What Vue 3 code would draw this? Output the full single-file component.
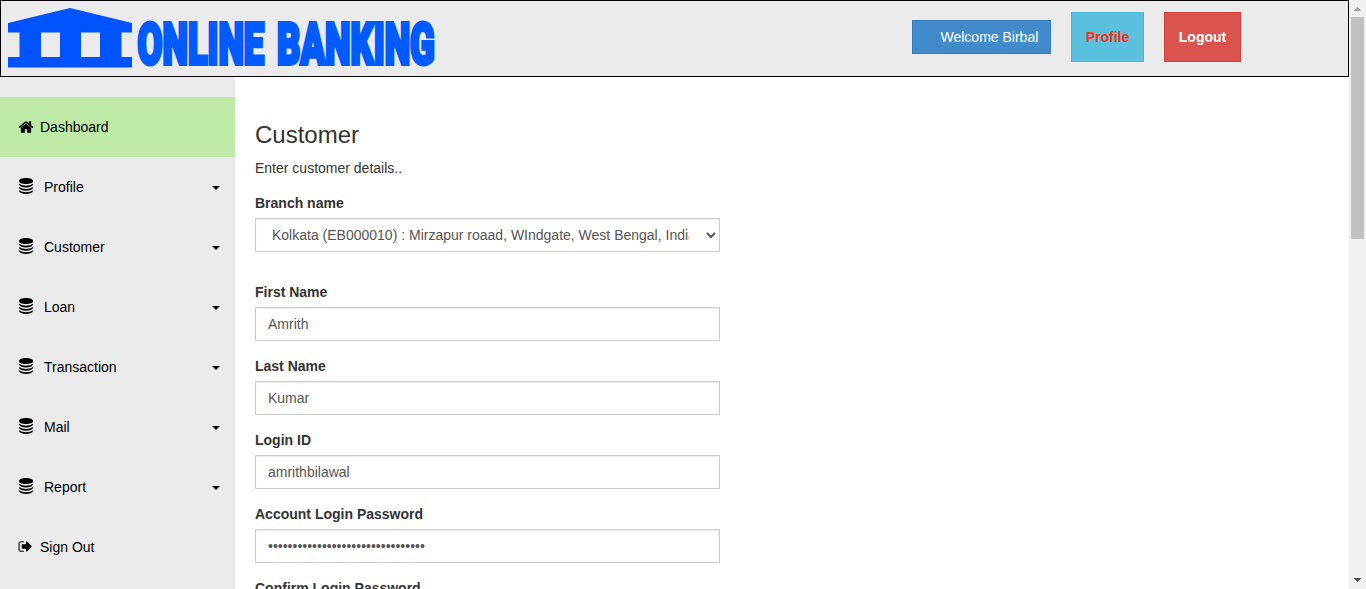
<script setup>
import { ref } from 'vue'

const icons = {
  home: { box: '0 0 1792 1792', d: 'M1472 992v480q0 26-19 45t-45 19h-384v-384h-256v384h-384q-26 0-45-19t-19-45v-480q0-1 .5-3t.5-3l575-474 575 474q1 2 1 6zm223-69l-62 74q-8 9-21 11h-3q-13 0-21-7l-692-577-692 577q-12 8-24 7-13-2-21-11l-62-74q-8-10-7-23.5t11-21.5l719-599q32-26 76-26t76 26l244 204v-195q0-14 9-23t23-9h192q14 0 23 9t9 23v408l219 182q10 8 11 21.5t-7 23.5z' },
  database: { box: '0 0 16 16', d: 'M1 2.900C1 1.100 4 0 8 0S15 1.100 15 2.900V3.300C15 5 12 6.100 8 6.100S1 5 1 3.300ZM1 5.800C4.500 8.300 11.500 8.300 15 5.800V6.800C14 8.800 11 9.500 8 9.500S2 8.800 1 6.800ZM1 9C4.500 11.500 11.500 11.500 15 9V10C14 12 11 12.700 8 12.700S2 12 1 10ZM1 12.300C4.500 14.800 11.500 14.800 15 12.300V13.300C14 15.300 11 16 8 16S2 15.300 1 13.300Z' },
  signout: { box: '0 0 1792 1792', d: 'M704 1440q0 4 1 20t.5 26.5-3 23.5-10 19.5-20.5 6.5h-320q-119 0-203.5-84.5t-84.5-203.5v-704q0-119 84.5-203.5t203.5-84.5h320q13 0 22.5 9.5t9.5 22.5q0 4 1 20t.5 26.5-3 23.5-10 19.5-20.5 6.5h-320q-66 0-113 47t-47 113v704q0 66 47 113t113 47h312l11.5 1 11.5 3 8 5.5 7 9 2 13.5zm928-544q0 26-19 45l-544 544q-19 19-45 19t-45-19-19-45v-288h-448q-26 0-45-19t-19-45v-384q0-26 19-45t45-19h448v-288q0-26 19-45t45-19 45 19l544 544q19 19 19 45z' },
}

const menu = [
  { label: 'Dashboard', icon: 'home', active: true },
  { label: 'Profile', icon: 'database' },
  { label: 'Customer', icon: 'database' },
  { label: 'Loan', icon: 'database' },
  { label: 'Transaction', icon: 'database' },
  { label: 'Mail', icon: 'database' },
  { label: 'Report', icon: 'database' },
  { label: 'Sign Out', icon: 'signout' },
]

const branch = 'Kolkata (EB000010) : Mirzapur roaad, WIndgate, West Bengal, India'
const fields = ref([
  { label: 'First Name', type: 'text', value: 'Amrith' },
  { label: 'Last Name', type: 'text', value: 'Kumar' },
  { label: 'Login ID', type: 'text', value: 'amrithbilawal' },
  { label: 'Account Login Password', type: 'password', value: 'x'.repeat(32) },
  { label: 'Confirm Login Password', type: 'password', value: 'x'.repeat(32) },
])
</script>

<template>
  <div class="window">
    <div class="page">
      <header class="topbar">
        <svg class="logo" width="440" height="75" viewBox="1 1 440 75">
          <path fill="#0053ff" fill-rule="evenodd" d="M8 23L70 8L132 23V32.500H121.500V57H132V67.500H8V57H19.500V32.500H8ZM41 32.500V57H60V32.500ZM81 32.500V57H100V32.500Z" />
          <g class="logo-text">
            <text transform="translate(137.500 63.700) scale(.6 1)" textLength="211" lengthAdjust="spacingAndGlyphs">ONLINE</text>
            <text transform="translate(277 63.700) scale(.6 1)" textLength="263" lengthAdjust="spacingAndGlyphs">BANKING</text>
          </g>
        </svg>
        <div class="actions">
          <a class="btn welcome">Welcome Birbal</a>
          <a class="btn tall profile">Profile</a>
          <a class="btn tall logout">Logout</a>
        </div>
      </header>
      <div class="body">
        <nav class="sidebar">
          <a v-for="item in menu" :key="item.label" class="item" :class="[item.icon, { active: item.active }]">
            <svg class="icon" :viewBox="icons[item.icon].box"><path :d="icons[item.icon].d" /></svg>
            <span>{{ item.label }}</span>
            <i v-if="item.icon === 'database'" class="caret"></i>
          </a>
        </nav>
        <main class="content">
          <h3>Customer</h3>
          <p>Enter customer details..</p>
          <div class="group branch">
            <label>Branch name</label>
            <select class="control"><option>{{ branch }}</option></select>
          </div>
          <div v-for="f in fields" :key="f.label" class="group">
            <label>{{ f.label }}</label>
            <input v-model="f.value" class="control" :type="f.type">
          </div>
        </main>
      </div>
    </div>
    <div class="scrollbar">
      <svg width="17" height="17" viewBox="0 0 17 17" shape-rendering="crispEdges"><path fill="#a3a3a3" d="M8 7h1v1h1v1h1v1h1v1H5v-1h1v-1h1v-1h1z" /></svg>
      <div class="thumb"></div>
      <svg class="down" width="17" height="17" viewBox="0 0 17 17" shape-rendering="crispEdges"><path fill="#505050" d="M5 6h7v1h-1v1h-1v1H9v1H8V9H7V8H6V7H5z" /></svg>
    </div>
  </div>
</template>

<style>
body {
  overflow: hidden;
}
</style>

<style scoped>
.window {
  display: flex;
  height: 589px;
  overflow: hidden;
  font: 14px/20px "Liberation Sans", Arial, sans-serif;
  color: #333;
  background: #fff;
}
.window * {
  box-sizing: border-box;
}
.page {
  flex: 1;
  min-width: 0;
}
.topbar {
  display: flex;
  justify-content: space-between;
  height: 77px;
  border: 1px solid #000;
  background: #ebebeb;
}
.logo {
  display: block;
}
.logo-text {
  font: 900 57px Roboto, sans-serif;
  fill: #005bff;
  stroke: #005bff;
  stroke-width: 4px;
}
.actions {
  display: flex;
  gap: 20px;
  padding: 11px 107px 0 0;
}
.btn {
  border: 1px solid;
  color: #fff;
  white-space: nowrap;
}
.welcome {
  width: 139px;
  height: 34px;
  margin-top: 8px;
  padding: 6px 0 0 27.5px;
  background: #428bca;
  border-color: #357ebd;
}
.tall {
  height: 50px;
  padding-top: 14px;
  font-weight: bold;
  text-align: center;
}
.profile {
  width: 73px;
  background: #5bc0de;
  border-color: #46b8da;
  color: #ff2e0c;
}
.logout {
  width: 77px;
  background: #d9534f;
  border-color: #d43f3a;
}
.body {
  display: flex;
  height: 512px;
  overflow: hidden;
}
.sidebar {
  width: 235px;
  padding-top: 20px;
  background: #ebebeb;
}
.item {
  display: flex;
  align-items: center;
  height: 60px;
  padding: 0 15px 0 18px;
  color: #000;
}
.item.active {
  background: #bfe9a6;
}
.icon {
  width: 16px;
  height: 16px;
  margin-right: 6px;
}
.database .icon {
  margin: -2px 10px 0 0;
}
.signout .icon {
  width: 15px;
  height: 15px;
  margin: -1px 7px 0 0;
}
.caret {
  margin: 1px 0 0 auto;
  border: 4px solid transparent;
  border-top-color: #000;
  border-bottom: 0;
}
.content {
  width: 505px;
  padding: 45px 20px 0;
}
h3 {
  margin: 0 0 10px;
  font-size: 24px;
  line-height: 26px;
  font-weight: 400;
}
p {
  margin: 0 0 15px;
}
.group {
  margin-bottom: 15px;
}
.branch {
  margin-bottom: 30px;
}
label {
  display: block;
  margin-bottom: 5px;
  font-weight: bold;
}
.control {
  display: block;
  width: 465px;
  height: 34px;
  margin: 0;
  padding: 6px 12px;
  border: 1px solid #ccc;
  border-radius: 0;
  box-shadow: inset 0 1px 1px rgba(0, 0, 0, 0.075);
  background-color: #fff;
  color: #555;
  font: inherit;
  outline: none;
}
select.control {
  padding-right: 14px;
}
.scrollbar {
  display: flex;
  flex-direction: column;
  width: 17px;
  background: #f1f1f1;
}
.thumb {
  height: 222px;
  margin: 0 2px;
  background: #c1c1c1;
}
.down {
  margin-top: auto;
}
</style>
